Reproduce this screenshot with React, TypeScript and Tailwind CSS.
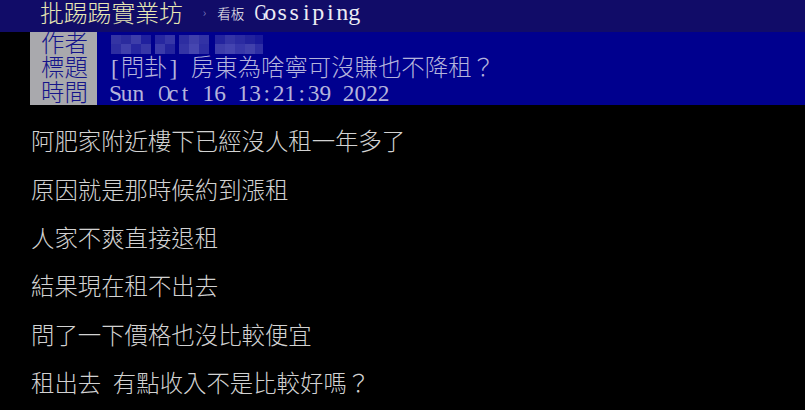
import React from "react";

const CJK = '"Noto Sans CJK TC", "Noto Sans CJK SC", sans-serif';
const SERIF = '"Liberation Serif", "Noto Sans CJK TC", serif';

const WIDE = "GOCDHMNQUWmw";

function Grid({ text }: { text: string }) {
  return (
    <>
      {Array.from(text).map((ch, i) => {
        const half = ch.charCodeAt(0) < 256;
        if (!half) {
          return (
            <span key={i} className="inline-block w-[1em] text-center">
              {ch}
            </span>
          );
        }
        const wide = WIDE.includes(ch);
        return (
          <span
            key={i}
            className="inline-block w-[0.5em] text-center"
            style={{ fontFamily: SERIF }}
          >
            <span className={wide ? "inline-block scale-x-[0.72]" : "inline-block"}>
              {ch === " " ? "\u00a0" : ch}
            </span>
          </span>
        );
      })}
    </>
  );
}

const mosaic: [number, number, number, number, string][] = [
  [0, 0, 10, 9, "#3a3aa6"], [10, 0, 10, 9, "#3030a0"], [20, 0, 10, 9, "#4444ac"], [30, 0, 10, 9, "#2424a0"],
  [44, 0, 10, 9, "#2c2ca2"], [54, 0, 10, 9, "#3c3caa"], [68, 0, 10, 9, "#3232a4"], [78, 0, 10, 9, "#4646ae"],
  [88, 0, 10, 9, "#3838a8"], [104, 0, 10, 9, "#2828a0"], [114, 0, 10, 9, "#3a3aa8"], [124, 0, 10, 9, "#3030a4"],
  [134, 0, 10, 9, "#26269e"], [144, 0, 8, 9, "#1c1c9c"],
  [0, 9, 10, 10, "#3232a4"], [10, 9, 10, 10, "#4848b0"], [20, 9, 10, 10, "#2c2ca2"], [30, 9, 10, 10, "#3e3eaa"],
  [44, 9, 10, 10, "#4242ae"], [54, 9, 10, 10, "#2828a0"], [68, 9, 10, 10, "#3a3aa8"], [78, 9, 10, 10, "#4e4eb4"],
  [88, 9, 10, 10, "#3232a6"], [104, 9, 10, 10, "#4444ae"], [114, 9, 10, 10, "#4c4cb4"], [124, 9, 10, 10, "#3e3eac"],
  [134, 9, 10, 10, "#4848b0"], [144, 9, 8, 10, "#3434a8"],
];

export default function App() {
  const body = [
    "阿肥家附近樓下已經沒人租一年多了",
    "原因就是那時候約到漲租",
    "人家不爽直接退租",
    "結果現在租不出去",
    "問了一下價格也沒比較便宜",
    "租出去 有點收入不是比較好嗎？",
  ];
  return (
    <div className="w-[805px] h-[410px] bg-black overflow-hidden font-light" style={{ fontFamily: CJK }}>
      {/* top bar */}
      <div className="h-[32px] bg-[#110c68] flex items-start pl-[40px] overflow-hidden">
        <div className="h-[32px] text-[23.8px] leading-[24px] text-[#e8e8b4] whitespace-nowrap">批踢踢實業坊</div>
        <div className="ml-[20px] pt-[6px] text-[12px] leading-[12px] text-[#8a8ac8]">›</div>
        <div className="ml-[11px] pt-[6px] text-[13.5px] leading-[14px] text-[#f2f2f2] whitespace-nowrap">看板</div>
        <div
          className="ml-[8px] h-[32px] text-[24px] leading-[24px] text-[#ececf4] whitespace-nowrap font-normal"
          style={{ fontFamily: SERIF }}
        >
          <Grid text="Gossiping" />
        </div>
      </div>
      {/* header */}
      <div className="flex pl-[30px] h-[73px] text-[23.4px] leading-[24.33px]">
        <div className="w-[67px] bg-[#a9a9ad] text-[#14148a] pl-[11px] pt-[0px]">
          <div className="h-[24.33px] -mt-[2px]">作者</div>
          <div className="h-[24.33px]">標題</div>
          <div className="h-[24.33px]">時間</div>
        </div>
        <div className="flex-1 bg-[#00008e] text-[#b4b4dc] pl-[12px]">
          <div className="h-[24.33px] flex items-center pl-[2px]">
            <svg width="152" height="19" className="opacity-90">
              {mosaic.map(([x, y, w, h, c], i) => (
                <rect key={i} x={x} y={y} width={w} height={h} fill={c} />
              ))}
            </svg>
          </div>
          <div className="h-[24.33px] whitespace-nowrap -mt-[2px]">
            <Grid text="[問卦] 房東為啥寧可沒賺也不降租？" />
          </div>
          <div className="h-[24.33px] whitespace-nowrap">
            <Grid text="Sun Oct 16 13:21:39 2022" />
          </div>
        </div>
      </div>
      {/* body */}
      <div className="pl-[31px] text-[23.4px] leading-[24.2px] text-[#d2d2d2] -mt-[1px]">
        {body.map((l, i) => (
          <div key={i} className="mt-[24.2px] h-[24.2px] whitespace-nowrap">
            <Grid text={l} />
          </div>
        ))}
      </div>
    </div>
  );
}
